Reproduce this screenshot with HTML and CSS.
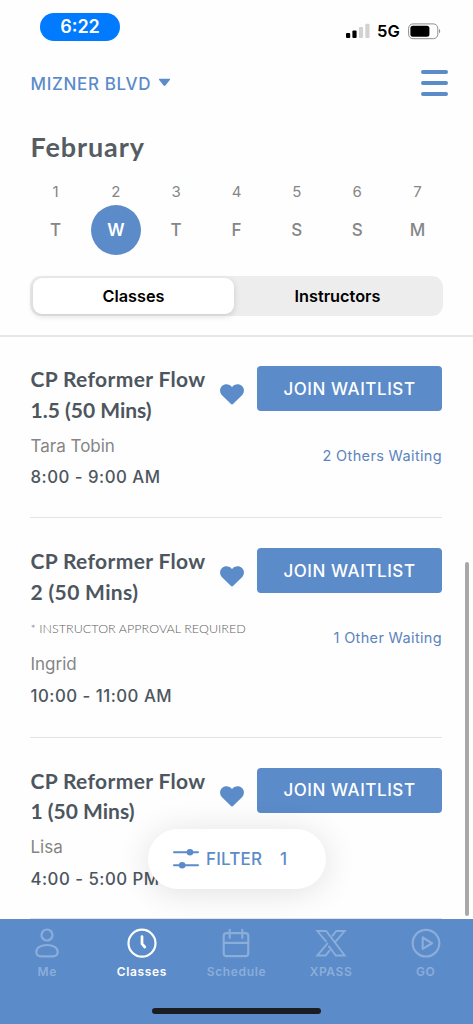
FILE: index.html
```html
<!DOCTYPE html>
<html lang="en">
<head>
<meta charset="utf-8">
<title>Classes</title>
<link rel="stylesheet" href="styles.css">
</head>
<body>
<div class="app">
  <header class="header">
    <div class="status">
      <span class="clock">6:22</span>
      <div class="status-icons">
        <svg class="signal" width="24" height="16" viewBox="0 0 24 16"><rect x="0" y="10" width="4.2" height="5" rx="1"/><rect x="6.4" y="7.4" width="4.2" height="7.6" rx="1"/><g fill="#d2d2d2"><rect x="12.9" y="4" width="4.2" height="11" rx="1"/><rect x="19.3" y="0.8" width="4.2" height="14.2" rx="1"/></g></svg>
        <span class="network">5G</span>
        <svg class="battery" width="34" height="17" viewBox="0 0 34 17"><rect x="0.6" y="0.9" width="29.2" height="14.8" rx="4.4" fill="none" stroke="#8e8e8e"/><rect x="2.4" y="2.8" width="19" height="11" rx="2.5"/><path d="M31.2 5.8q2 2.4 0 4.8z" fill="#777"/></svg>
      </div>
    </div>
    <div class="topbar">
      <div class="location"><span class="location-name">MIZNER BLVD</span>
        <svg width="13" height="9" viewBox="0 0 13 9"><path d="M1.6.8h9.8q1.3 0 .4 1.1L7.4 7.5q-.9.9-1.800 0L1.200 1.900Q.3.8 1.600.8z" fill="#5b8bc9"/></svg>
      </div>
      <div class="menu"><i></i><i></i><i></i></div>
    </div>
    <h1 class="month">February</h1>
    <div class="week">
      <div class="day"><span>1</span><b>T</b></div>
      <div class="day selected"><span>2</span><b>W</b></div>
      <div class="day"><span>3</span><b>T</b></div>
      <div class="day"><span>4</span><b>F</b></div>
      <div class="day"><span>5</span><b>S</b></div>
      <div class="day"><span>6</span><b>S</b></div>
      <div class="day"><span>7</span><b>M</b></div>
    </div>
    <div class="segments"><div class="segment active">Classes</div><div class="segment">Instructors</div></div>
  </header>

  <main class="list">
    <article class="card first">
      <div class="info">
        <h2 class="title"><span class="line">CP Reformer Flow</span><span class="line tight">1.5 (50 Mins)</span></h2>
        <p class="teacher">Tara Tobin</p>
        <p class="time">8:00 - 9:00 AM</p>
      </div>
      <svg class="heart" width="24" height="22" viewBox="0 0 24 22"><path d="M11 20.100 2 11.200C-.6 8.400-.5 4.200 2 2 4.700-.5 8.700-.2 11.200 2.200l.8.7.8-.7C15.300-.2 19.300-.5 22 2c2.500 2.200 2.600 6.400 0 9.200l-9 8.900q-1 .9-2 0z"/></svg>
      <div class="actions"><button class="join">JOIN WAITLIST</button><span class="waiting">2 Others Waiting</span></div>
    </article>
    <article class="card">
      <div class="info">
        <h2 class="title"><span class="line">CP Reformer Flow</span><span class="line">2 (50 Mins)</span></h2>
        <p class="note">* INSTRUCTOR APPROVAL REQUIRED</p>
        <p class="teacher">Ingrid</p>
        <p class="time">10:00 - 11:00 AM</p>
      </div>
      <svg class="heart" width="24" height="22" viewBox="0 0 24 22"><path d="M11 20.100 2 11.200C-.6 8.400-.5 4.200 2 2 4.700-.5 8.700-.2 11.200 2.200l.8.7.8-.7C15.300-.2 19.300-.5 22 2c2.500 2.200 2.600 6.400 0 9.200l-9 8.900q-1 .9-2 0z"/></svg>
      <div class="actions"><button class="join">JOIN WAITLIST</button><span class="waiting">1 Other Waiting</span></div>
    </article>
    <article class="card last">
      <div class="info">
        <h2 class="title"><span class="line">CP Reformer Flow</span><span class="line tight">1 (50 Mins)</span></h2>
        <p class="teacher">Lisa</p>
        <p class="time">4:00 - 5:00 PM</p>
      </div>
      <svg class="heart" width="24" height="22" viewBox="0 0 24 22"><path d="M11 20.100 2 11.200C-.6 8.400-.5 4.200 2 2 4.700-.5 8.700-.2 11.200 2.200l.8.7.8-.7C15.300-.2 19.300-.5 22 2c2.500 2.200 2.600 6.400 0 9.200l-9 8.900q-1 .9-2 0z"/></svg>
      <div class="actions"><button class="join">JOIN WAITLIST</button></div>
    </article>
    <div class="scrollbar"></div>
    <div class="filter">
      <svg width="26" height="22" viewBox="0 0 26 22" stroke="#5b8bc9" stroke-width="2" stroke-linecap="round" fill="#5b8bc9"><path d="M1 4.200h24M1 17.300h24"/><circle cx="17" cy="4.200" r="2.300"/><circle cx="9.200" cy="17.300" r="2.300"/></svg>
      <span class="filter-label">FILTER</span><span class="filter-count">1</span>
    </div>
  </main>

  <nav class="tabs">
    <div class="tab"><svg width="32" height="32" viewBox="0 0 32 32"><circle cx="16" cy="7" r="5.500"/><path d="M10.500 28.300h11c3.500 0 5.200-1.600 5.200-4.300 0-4.200-4.500-7-10.700-7s-10.700 2.800-10.700 7c0 2.700 1.700 4.300 5.200 4.300z"/></svg><span>Me</span></div>
    <div class="tab current"><svg width="32" height="32" viewBox="0 0 32 32"><circle cx="16" cy="15.200" r="13.500"/><path d="M16 8.500v7.300l2.800 3.200" stroke-width="2.700"/></svg><span>Classes</span></div>
    <div class="tab"><svg width="32" height="32" viewBox="0 0 32 32"><rect x="3.700" y="5.200" width="24.600" height="23" rx="3"/><path d="M3.700 14.800h24.600M9.700 1.800v8M22.300 1.800v8"/></svg><span>Schedule</span></div>
    <div class="tab"><svg width="32" height="32" viewBox="0 0 32 32"><path stroke-width="1.900" d="M11 13.300 2.300 3h8.900l18.500 24.500h-8.900l-6.900-9.100M17.600 7.700 21.300 3h8.400l-9.600 11.100M14.300 22.800l-3.700 4.700H2.300l10-11.900"/></svg><span>XPASS</span></div>
    <div class="tab"><svg width="32" height="32" viewBox="0 0 32 32"><circle cx="16" cy="15.200" r="13.300"/><path stroke-linejoin="round" d="M12.700 9.500v11.400l9.300-5.700z"/></svg><span>GO</span></div>
    <div class="home"></div>
  </nav>
</div>
</body>
</html>
```
FILE: styles.css
```css
* { box-sizing: border-box; }
body { margin: 0; background: #fefefe; font-family: Inter, "Liberation Sans", sans-serif; color: #4d565e; }
h1, h2, p { margin: 0; }
svg { display: block; flex: none; }
.app { width: 473px; height: 1024px; display: flex; flex-direction: column; overflow: hidden; }

.header { height: 337px; flex: none; padding: 0 30px; border-bottom: 2px solid #e7e7e7; }
.status { height: 62px; display: flex; justify-content: space-between; align-items: flex-start; padding: 13px 2px 0 10px; }
.clock { width: 80px; height: 28px; border-radius: 14px; background: #007aff; color: #fff; font-weight: 600; font-size: 18px; line-height: 28px; text-align: center; }
.status-icons { display: flex; align-items: center; height: 20px; margin-top: 8px; margin-right: -1px; color: #000; }
.network { margin-left: 7px; width: 31px; font-size: 16.500px; font-weight: 600; }
.signal { margin-top: -1px; }
.topbar { height: 44px; display: flex; justify-content: space-between; align-items: center; }
.location { display: flex; align-items: center; color: #5b8bc9; }
.location-name { font-size: 17px; font-weight: 500; letter-spacing: .650px; width: 128px; padding-left: .5px; white-space: nowrap; }
.location svg { margin-top: -4px; }
.menu { width: 27px; margin-right: -5px; margin-top: -2px; display: flex; flex-direction: column; gap: 7px; }
.menu i { height: 4px; background: #5b8bc9; border-radius: 2px; }
.month { height: 40px; margin-top: 21px; font: 700 27px/40px Lato, sans-serif; letter-spacing: .9px; color: #555c62; padding-left: .5px; }
.week { display: flex; justify-content: space-between; margin-top: 14px; height: 74px; }
.day { width: 51px; display: flex; flex-direction: column; align-items: center; color: #858688; }
.day span { height: 23.500px; line-height: 21px; font-size: 15px; }
.day b { flex: none; width: 50px; height: 50px; border-radius: 50%; line-height: 51px; text-align: center; font-size: 17px; font-weight: 500; }
.selected b { background: #5b8bc9; color: #fff; font-weight: 600; }
.segments { margin-top: 21px; height: 40px; border-radius: 11px; background: #ededee; display: flex; padding: 2px 2px 2px 3px; }
.segment { flex: 1; border-radius: 9px; line-height: 36px; text-align: center; font-size: 16.300px; font-weight: 600; color: #000; }
.segment.active { flex: none; width: 201px; background: #fff; box-shadow: 0 2px 6px rgba(0,0,0,.15); }

.list { position: relative; height: 582px; flex: none; overflow: hidden; padding: 0 31px 0 30px; }
.card { display: flex; padding: 28px 0 30px; border-bottom: 1px solid #e4e4e4; }
.card.first { padding: 27px 0 29px; }
.card.last { padding-bottom: 28px; }
.info { width: 190px; padding-left: .5px; white-space: nowrap; }
.title { font: 700 21px/30.500px Lato, sans-serif; letter-spacing: .350px; color: #4d565e; }
.line { display: block; }
.tight { letter-spacing: 0; }
.teacher { margin-top: 9.500px; line-height: 22px; font-size: 17px; color: #858585; }
.time { margin-top: 9.500px; line-height: 22px; font-size: 16.800px; font-weight: 500; letter-spacing: .5px; }
.note { margin-top: 14px; margin-bottom: 16px; height: 16px; font: 300 12.500px/16px Lato, sans-serif; letter-spacing: .050px; color: #606060; }
.note + .teacher { margin-top: 0; }
.heart { margin-top: 20px; fill: #5b8bc9; }
.actions { width: 185px; margin-left: auto; margin-top: 2px; display: flex; flex-direction: column; align-items: flex-end; }
.join { width: 185px; height: 45px; border: 0; border-radius: 4px; padding: 0; background: #5b8bc9; color: #fff; font: 500 17px Inter, sans-serif; letter-spacing: .550px; }
.waiting { margin-top: 34px; line-height: 22px; font-size: 14.500px; letter-spacing: .350px; color: #5b84bd; }
.scrollbar { position: absolute; right: 4px; top: 225px; width: 4px; height: 354px; border-radius: 2px; background: #a8a8a8; }
.filter { position: absolute; left: 148px; top: 492px; width: 178px; height: 60px; border-radius: 30px; background: #fff; box-shadow: 0 3px 34px rgba(0,0,0,.12); display: flex; align-items: center; padding-left: 25px; color: #5b8bc9; font-size: 17px; font-weight: 500; }
.filter-label { margin-left: 7px; width: 74px; letter-spacing: .2px; }

.tabs { position: relative; flex: 1; background: #5b8bc9; display: flex; padding-top: 9px; }
.tab { flex: 1; display: flex; flex-direction: column; align-items: center; color: #8badda; font-size: 12px; font-weight: 600; letter-spacing: .650px; }
.tab svg { fill: none; stroke: currentColor; stroke-width: 2.200; stroke-linecap: round; }
.tab span { margin-top: 3px; line-height: 18px; }
.tab.current { color: #fff; }
.home { position: absolute; left: 152px; bottom: 10px; width: 169px; height: 6px; border-radius: 3px; background: #1a1e22; }
```
